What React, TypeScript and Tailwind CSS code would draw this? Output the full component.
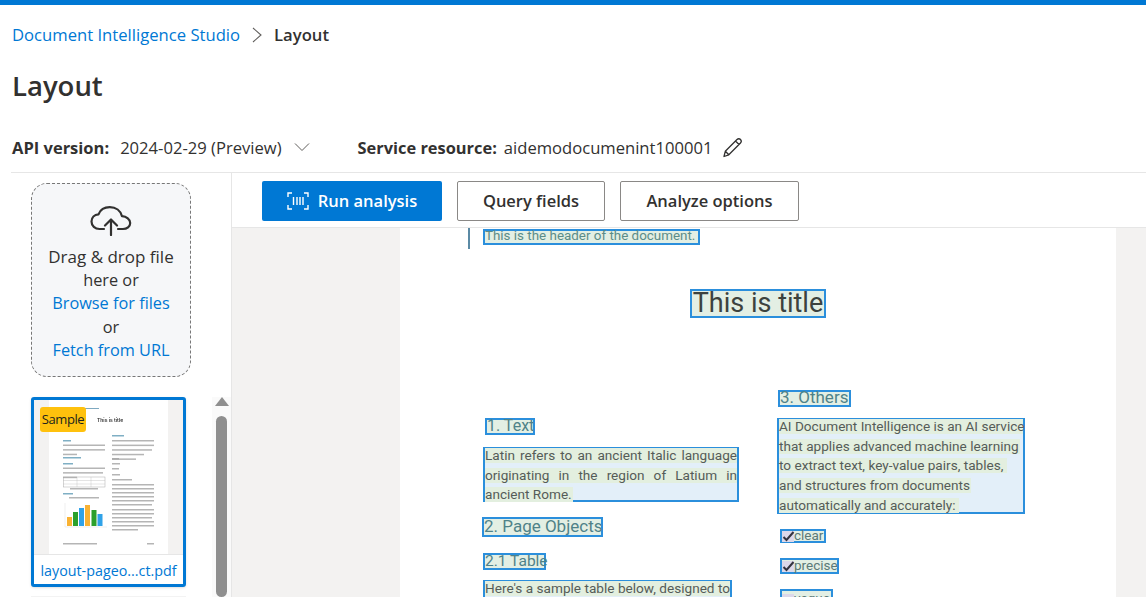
import React from "react";

const sans = "font-['Open_Sans','Noto_Sans',sans-serif]";

function ScanIcon() {
  return (
    <svg width="22" height="20" viewBox="0 0 22 20" fill="none" stroke="white" strokeWidth="1.4">
      <path d="M1 6V2h4M17 2h4v4M21 14v4h-4M5 18H1v-4" />
      <path d="M6.5 6v8M10 6v8M13 6v8M16 6v8" />
    </svg>
  );
}

function CloudIcon() {
  return (
    <svg width="42" height="30" viewBox="0 0 42 30" fill="none" stroke="#323130" strokeWidth="2.2" strokeLinecap="round" strokeLinejoin="round">
      <path d="M14 23H9.5C5 23 1.5 19.8 1.5 15.6c0-4 3-7 7-7.3C10.3 3.800 14.800 1.200 19.800 1.200c6 0 10.800 3.600 12.200 9 4.500.2 8.200 3.200 8.200 6.800 0 3.500-3.300 6-7.200 6H28" />
      <path d="M21 29V14M15 19.500l6-6 6 6" />
    </svg>
  );
}

function Thumb() {
  const lines = (x: number, y: number, ws: number[], c = "#a3a3a3", gap = 4.600) =>
    ws.map((w, i) => <rect key={`${x}-${y}-${i}`} x={x} y={y + i * gap} width={w} height="1.500" fill={c} opacity="0.8" />);
  const bars: [number, number, string][] = [
    [33, 117, "#f9b233"], [39, 112, "#2ca02c"], [45, 108, "#30a2e8"],
    [51, 105, "#f9b233"], [57.500, 110, "#2ca02c"], [63.500, 114, "#30a2e8"],
  ];
  return (
    <svg width="149" height="154" viewBox="0 0 149 154" className="block">
      <rect width="149" height="154" fill="#f3f2f1" />
      <rect x="15" width="119" height="154" fill="#ffffff" />
      <g className="blur-[0.3px]">
        <rect x="51" y="8" width="14" height="1" fill="#7fa9c0" />
        <text x="63" y="22" fontSize="5" fontFamily="Inter, sans-serif" fontWeight="600" fill="#333">This is title</text>
        {lines(29, 40, [8], "#5f9bb5")}
        {lines(29, 44.500, [42, 42, 14])}
        {lines(29, 57, [18], "#5f9bb5")}
        {lines(29, 63, [10], "#5f9bb5")}
        {lines(29, 67.500, [42, 40, 14])}
        <rect x="29.500" y="77" width="41.500" height="10" fill="none" stroke="#aaa" strokeWidth="0.5" />
        <path d="M29 80.500h42M29 84h42M43 77v10M57 77v10" stroke="#bbb" strokeWidth="0.4" />
        {lines(36, 88, [28])}
        {lines(29, 93, [10], "#5f9bb5")}
        {lines(35, 97, [30])}
        {bars.map(([x, y, c]) => <rect key={x} x={x} y={y} width="5" height={126 - y} fill={c} />)}
        <path d="M31 103v24h42" stroke="#ddd" strokeWidth="0.5" fill="none" />
        {lines(78, 35, [12], "#5f9bb5")}
        {lines(78, 40, [42, 42, 40, 32, 24])}
        {lines(78, 58, [7])}
        {lines(78, 63, [8])}
        {lines(78, 68, [7])}
        {lines(78, 74, [8])}
        {lines(78, 79, [20])}
        {lines(78, 84, [42, 42, 42, 42, 42, 40], "#a3a3a3", 4)}
        {lines(78, 109, [42, 42, 40, 42, 42, 26], "#a3a3a3", 4)}
        {lines(29, 143, [34])}
        {lines(113, 143, [7])}
      </g>
    </svg>
  );
}

function PageText() {
  const box = "absolute border-2 border-[#2b8fdc] font-['Roboto',sans-serif]";
  const heading = "text-[#4f8288] whitespace-nowrap bg-[#e3efe4]";
  const line = "block h-[15px] shrink-0 bg-[#e3efdf] text-[13.600px] leading-[15px] text-[#555c58] whitespace-nowrap";
  return (
    <>
      <div className="absolute left-[68px] top-0 h-[21px] w-[2px] bg-[#5b8aa5]" />
      <div className={`${box} left-[83px] top-[1px] h-[16px] w-[217px] text-[13.400px] leading-[10px] text-[#5c8c88] whitespace-nowrap bg-[#e3efe4]`}>This is the header of the document.</div>
      <div className={`${box} left-[290px] top-[61px] h-[29px] w-[136px] text-[27px] leading-[25px] text-[#3c423e] whitespace-nowrap bg-[#e3efe4] text-center`}>This is title</div>

      <div className={`${box} ${heading} left-[85px] top-[190px] h-[17px] w-[50px] text-[16px] leading-[12px]`}>1. Text</div>
      <div className={`${box} left-[83px] top-[219px] h-[55px] w-[256px] bg-[#e3eff9] flex flex-col gap-[4.500px]`}>
        <span className={`${line} -mt-[1px] [text-align-last:justify]`}>Latin refers to an ancient Italic language</span>
        <span className={`${line} [text-align-last:justify]`}>originating in the region of Latium in</span>
        <span className={`${line} w-[88px]`}>ancient Rome.</span>
      </div>
      <div className={`${box} ${heading} left-[82px] top-[289px] h-[20px] w-[121px] text-[17px] leading-[15px]`}>2. Page Objects</div>
      <div className={`${box} ${heading} left-[83px] top-[325px] h-[17px] w-[63px] text-[15.500px] leading-[12px]`}>2.1 Table</div>
      <div className={`${box} left-[83px] top-[352px] h-[30px] w-[249px] bg-[#e3eff9] flex flex-col`}>
        <span className={`${line} -mt-[1px] [text-align-last:justify]`}>Here's a sample table below, designed to</span>
      </div>

      <div className={`${box} ${heading} left-[378px] top-[162px] h-[17px] w-[73px] text-[17px] leading-[11px]`}>3. Others</div>
      <div className={`${box} left-[377px] top-[190px] h-[96px] w-[248px] bg-[#e3eff9] flex flex-col gap-[4.700px]`}>
        <span className={`${line} -mt-[1px] w-[244px]`}>AI Document Intelligence is an AI service</span>
        <span className={`${line} w-[241px]`}>that applies advanced machine learning</span>
        <span className={`${line} w-[228px]`}>to extract text, key-value pairs, tables,</span>
        <span className={`${line} w-[192px]`}>and structures from documents</span>
        <span className={`${line} w-[180px]`}>automatically and accurately:</span>
      </div>
      {[
        ["left-[380px] top-[301px] w-[46px] h-[14px]", "clear", true],
        ["left-[380px] top-[330px] w-[59px] h-[16px]", "precise", true],
        ["left-[380px] top-[361px] w-[53px] h-[20px]", "vague", false],
      ].map(([pos, label, checked]) => (
        <div key={label as string} className={`${box} ${pos as string} flex items-center bg-[#e3efe4] text-[13.500px] leading-none text-[#5c7a78]`}>
          <span className="relative h-[11px] w-[12px] shrink-0 bg-[#dcd8ea]">
            {checked ? (
              <svg width="13" height="11" viewBox="0 0 13 11" fill="none" stroke="#33333f" strokeWidth="2" className="absolute left-0 top-0">
                <path d="M1.500 6l3 3 7-8" />
              </svg>
            ) : null}
          </span>
          <span>{label as string}</span>
        </div>
      ))}
    </>
  );
}

export default function App() {
  return (
    <div className={`h-[597px] w-[1146px] overflow-hidden bg-white text-[#323130] flex flex-col ${sans}`}>
      <div className="h-[5px] shrink-0 bg-[#0078d4]" />
      <div className="mt-[18px] flex h-[24px] items-center pl-[12px] text-[16.650px]">
        <span className="text-[#0078d4]">Document Intelligence Studio</span>
        <svg width="12" height="16" viewBox="0 0 12 16" fill="none" stroke="#605e5c" strokeWidth="1.100" className="ml-[11px] mr-[11px]">
          <path d="M2 1l8 7-8 7" />
        </svg>
        <span className="font-semibold">Layout</span>
      </div>
      <h1 className="mt-[19px] h-[40px] pl-[12px] text-[27.500px] font-semibold leading-[40px]">Layout</h1>
      <div className="mt-[30px] flex h-[24px] items-center pl-[12px] text-[16.600px]">
        <span className="text-[16.500px] font-bold">API version:</span>
        <span className="ml-[11px]">2024-02-29 (Preview)</span>
        <svg width="16" height="10" viewBox="0 0 16 10" fill="none" stroke="#605e5c" strokeWidth="1" className="ml-[12px] -mt-[2px]">
          <path d="M1 1.500l7 7 7-7" />
        </svg>
        <span className="ml-[48px] text-[16.400px] font-bold">Service resource:</span>
        <span className="ml-[7px]">aidemodocumenint100001</span>
        <svg width="24" height="24" viewBox="0 0 24 24" fill="none" stroke="#323130" strokeWidth="1.300" strokeLinejoin="round" className="ml-[8px]">
          <path d="M4 20.500l1.300-5.200L17 3.500c1-1 2.600-1 3.500 0s1 2.500 0 3.500L8.800 18.800 4 20.500zM15.500 5l3.500 3.500M5.300 15.300l3.500 3.500" />
        </svg>
      </div>

      <div className="mt-[12px] ml-[11px] h-[1px] shrink-0 bg-[#e6e6e6]" />

      <div className="flex min-h-0 flex-1">
        <aside className="relative ml-[11px] flex w-[221px] shrink-0 border-r border-[#e6e6e6]">
          <div className="flex w-[200px] flex-col pl-[20px]">
            <div className="mt-[10px] flex h-[194px] w-[160px] shrink-0 flex-col items-center rounded-[16px] border border-dashed border-[#777] bg-[#f6f7f9] text-center text-[16.300px] leading-[23.500px]">
              <div className="mt-[22px] mb-[9px] h-[30px]"><CloudIcon /></div>
              <span className="text-[17px]">Drag &amp; drop file</span>
              <span>here or</span>
              <span className="text-[#0078d4]">Browse for files</span>
              <span>or</span>
              <span className="text-[#0078d4]">Fetch from URL</span>
            </div>
            <div className="relative mt-[20px] w-[155px] shrink-0 overflow-hidden rounded-[3px] border-[3px] border-[#0078d4] bg-white shadow-sm">
              <Thumb />
              <div className="absolute left-[6px] top-[7px] flex h-[25px] w-[46px] items-center justify-center rounded-[3px] bg-[#ffc10d] text-[13px] tracking-[-0.4px] text-[#201f1e]">Sample</div>
              <div className="h-[30px] whitespace-nowrap border-t border-[#e6e6e6] text-center text-[14.300px] leading-[31px] text-[#0078d4]">layout-pageo...ct.pdf</div>
            </div>
            <div className="mt-[9px] h-[4px] w-[155px] shrink-0 bg-[#f3f3f3]" />
          </div>
          <div className="absolute right-0 top-[224px] flex h-[200px] w-[19px] flex-col items-center bg-[#fafafa]">
            <div className="h-0 w-0 border-x-[7px] border-b-[9px] border-x-transparent border-b-[#8f8f8f]" />
            <div className="mt-[10px] h-[200px] w-[11px] rounded-full bg-[#8f8f8f]" />
          </div>
        </aside>

        <main className="flex min-w-0 flex-1 flex-col">
          <div className="flex h-[55px] shrink-0 items-start gap-[15px] border-b border-[#e6e6e6] pl-[30px] pt-[8px] text-[16.500px] font-semibold">
            <button className="flex h-[40px] w-[180px] items-center justify-center gap-[9px] rounded-[2px] bg-[#0078d4] text-white">
              <ScanIcon />
              <span>Run analysis</span>
            </button>
            <button className="h-[40px] w-[148px] rounded-[2px] border border-[#8a8886]">Query fields</button>
            <button className="h-[40px] w-[179px] rounded-[2px] border border-[#8a8886]">Analyze options</button>
          </div>
          <div className="flex min-h-0 flex-1 bg-[#f3f2f1] pl-[168px]">
            <div className="relative h-full w-[716px] overflow-hidden bg-white">
              <PageText />
            </div>
          </div>
        </main>
      </div>
    </div>
  );
}
